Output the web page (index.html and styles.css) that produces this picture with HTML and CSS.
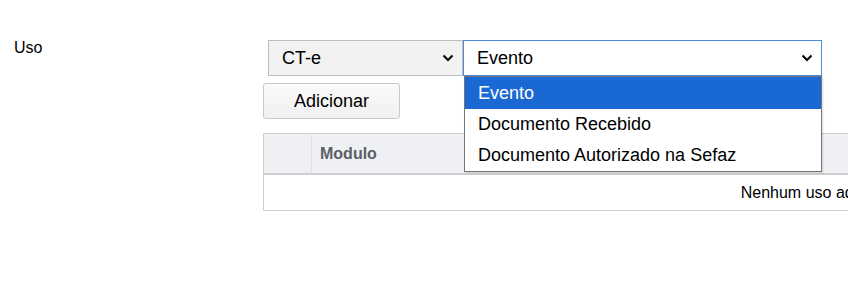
FILE: index.html
```html
<!DOCTYPE html>
<html lang="pt-BR">
<head>
<meta charset="UTF-8" />
<meta name="viewport" content="width=device-width, initial-scale=1" />
<title>Uso</title>
<link rel="stylesheet" href="styles.css">
</head>
<body>

<div class="form-row">
  <div class="form-label">Uso</div>

  <div class="form-field">
    <div class="select-group">
      <div class="select select-modulo">
        <span>CT-e</span>
        <svg class="chevron" width="12" height="8" viewBox="0 0 12 8"><path d="M1.5 1.5 L6 6 L10.5 1.5" fill="none" stroke="#000" stroke-width="2"/></svg>
      </div>
      <div class="select select-uso is-open">
        <span>Evento</span>
        <svg class="chevron" width="12" height="8" viewBox="0 0 12 8"><path d="M1.5 1.5 L6 6 L10.5 1.5" fill="none" stroke="#000" stroke-width="2"/></svg>
        <ul class="select-options">
          <li class="selected">Evento</li>
          <li>Documento Recebido</li>
          <li>Documento Autorizado na Sefaz</li>
        </ul>
      </div>
    </div>

    <button class="btn" type="button">Adicionar</button>

    <div class="table-wrap">
      <table class="grid">
        <thead>
          <tr>
            <th class="col-acoes"></th>
            <th>Modulo</th>
          </tr>
        </thead>
        <tbody>
          <tr>
            <td class="empty" colspan="2">Nenhum uso adicionado</td>
          </tr>
        </tbody>
      </table>
    </div>
  </div>
</div>

</body>
</html>
```

FILE: styles.css
```css
body {
  margin: 0; padding: 0;
  font-family: "Liberation Sans", Arial, sans-serif;
  background: #fff;
  color: #000;
  overflow: hidden;
}
.form-row {
  display: flex;
  padding-top: 40px;
}
.form-label {
  width: 249px;
  flex: none;
  padding-left: 14px;
  margin-top: -1px;
  font-size: 16px;
  line-height: 18px;
}
.form-field {
  flex: 1;
  min-width: 0;
}
.select-group {
  display: flex;
  margin-left: 5px;
}
.select {
  position: relative;
  box-sizing: border-box;
  height: 36px;
  display: flex;
  align-items: center;
  justify-content: space-between;
  padding: 0 8px 0 13px;
  border: 1px solid #bdbdbd;
  font-size: 18px;
}
.select-modulo {
  width: 195px;
  background: #f2f2f2;
}
.select-uso {
  width: 359px;
  background: #fff;
  border-color: #4f8ad6;
}
.chevron {
  display: block;
}
.select-options {
  position: absolute;
  z-index: 10;
  top: 35px;
  left: 0;
  right: -1px;
  margin: 0;
  padding: 0;
  list-style: none;
  background: #fff;
  border: 1px solid #767676;
  box-shadow: 1px 1px 2px rgba(0,0,0,0.15);
}
.select-options li {
  height: 31px;
  line-height: 31px;
  padding-left: 13px;
  font-size: 18px;
}
.select-options li.selected {
  height: 32px;
  line-height: 32px;
  background: #1a68d3;
  color: #fff;
}
.btn {
  display: block;
  margin-top: 7px;
  width: 137px;
  height: 36px;
  border: 1px solid #c8c8c8;
  border-radius: 3px;
  background: linear-gradient(#fafafa, #f0f0f0);
  font-family: inherit;
  font-size: 18px;
  color: #000;
}
.table-wrap {
  margin-top: 14px;
  overflow: hidden;
}
.grid {
  width: 1128px;
  border-collapse: collapse;
  border: 1px solid #cfcfcf;
}
.grid th {
  height: 39px;
  padding: 0 8px;
  background: #eef0f3;
  border-bottom: 2px solid #cfcfcf;
  text-align: left;
  font-size: 16px;
  font-weight: bold;
  color: #5b5f67;
}
.grid th.col-acoes {
  width: 31px;
  border-right: 1px solid #e1e3e6;
}
.grid td.empty {
  height: 35px;
  padding: 0;
  text-align: center;
  font-size: 16px;
}
```
